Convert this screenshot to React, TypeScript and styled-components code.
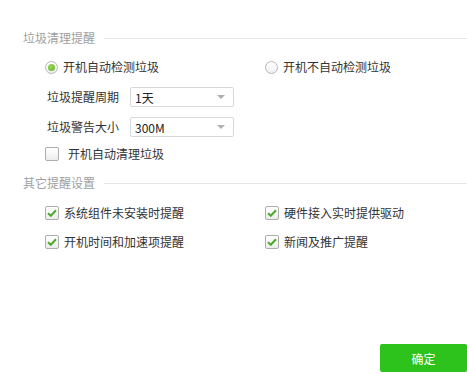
import React from 'react'
import styled, { createGlobalStyle } from 'styled-components'

const GlobalStyle = createGlobalStyle`
  html, body {
    margin: 0;
    padding: 0;
    background: #fff;
  }
  body {
    font-family: "Noto Sans CJK SC", "Liberation Sans", sans-serif;
    font-size: 12px;
    color: #333;
  }
`

const Page = styled.div`
  width: 467px;
  height: 374px;
  display: flex;
  flex-direction: column;
  box-sizing: border-box;
  padding-top: 28px;
  padding-bottom: 2px;
`

const SectionHeader = styled.div<{ $mt?: number }>`
  display: flex;
  align-items: center;
  height: 20px;
  padding-left: 23px;
  margin-top: ${(p) => p.$mt ?? 0}px;
  span {
    color: #a0a0a0;
    line-height: 20px;
    padding-right: 9px;
  }
  i {
    flex: 1;
    height: 1px;
    background: #e6e6e6;
  }
`

const Grid = styled.div<{ $mt: number; $gap: number }>`
  display: grid;
  grid-template-columns: 220px 1fr;
  row-gap: ${(p) => p.$gap}px;
  padding-left: 45px;
  margin-top: ${(p) => p.$mt}px;
`

const Option = styled.label<{ $gap?: number }>`
  display: flex;
  align-items: center;
  height: 20px;
  gap: ${(p) => p.$gap ?? 5}px;
  line-height: 20px;
  cursor: pointer;
`

const RadioMark = styled.span<{ $on?: boolean }>`
  width: 13px;
  height: 13px;
  box-sizing: border-box;
  border-radius: 50%;
  border: 1px solid #b8b8b8;
  background: linear-gradient(#ffffff, #f0f0f0);
  display: flex;
  align-items: center;
  justify-content: center;
  &::after {
    content: '';
    display: ${(p) => (p.$on ? 'block' : 'none')};
    width: 7px;
    height: 7px;
    border-radius: 50%;
    background: radial-gradient(circle at 40% 35%, #9ad85a, #5fb526);
  }
`

const CheckMark = styled.span<{ $on?: boolean }>`
  width: 14px;
  height: 14px;
  box-sizing: border-box;
  border-radius: 2px;
  border: 1px solid #adadad;
  background: linear-gradient(#ffffff, #ececec);
  display: flex;
  align-items: center;
  justify-content: center;
  svg {
    display: ${(p) => (p.$on ? 'block' : 'none')};
  }
`

const Field = styled.div<{ $mt: number }>`
  display: flex;
  align-items: center;
  height: 20px;
  margin-top: ${(p) => p.$mt}px;
  padding-left: 47px;
  gap: 10px;
  span {
    width: 73px;
    line-height: 20px;
  }
`

const Select = styled.div`
  width: 104px;
  height: 20px;
  box-sizing: border-box;
  border: 1px solid #d8d8d8;
  border-radius: 2px;
  display: flex;
  align-items: center;
  justify-content: space-between;
  padding: 0 8px 0 4px;
  font-size: 12px;
  color: #222;
  &::after {
    content: '';
    width: 0;
    height: 0;
    border-left: 4px solid transparent;
    border-right: 4px solid transparent;
    border-top: 4px solid #b0b0b0;
  }
`

const Row = styled.div<{ $mt: number }>`
  padding-left: 45px;
  margin-top: ${(p) => p.$mt}px;
`

const Footer = styled.div`
  margin-top: auto;
  display: flex;
  justify-content: flex-end;
`

const Button = styled.button`
  width: 87px;
  height: 28px;
  border: none;
  border-radius: 2px;
  background: #2ec21c;
  color: #fff;
  font-family: inherit;
  font-size: 12px;
  cursor: pointer;
`

const Tick = () => (
  <svg width="10" height="8" viewBox="0 0 10 8">
    <path d="M1 4.2 L3.8 6.8 L9 1.2" fill="none" stroke="#4ea82a" strokeWidth="2" />
  </svg>
)

const Check = ({ on, label, gap }: { on: boolean; label: string; gap?: number }) => (
  <Option $gap={gap}>
    <CheckMark $on={on}>
      <Tick />
    </CheckMark>
    {label}
  </Option>
)

const App = () => {
  return (
    <Page>
      <GlobalStyle />
      <SectionHeader>
        <span>垃圾清理提醒</span>
        <i />
      </SectionHeader>
      <Grid $mt={9} $gap={0}>
        <Option>
          <RadioMark $on />
          开机自动检测垃圾
        </Option>
        <Option>
          <RadioMark />
          开机不自动检测垃圾
        </Option>
      </Grid>
      <Field $mt={10}>
        <span>垃圾提醒周期</span>
        <Select>1天</Select>
      </Field>
      <Field $mt={10}>
        <span>垃圾警告大小</span>
        <Select>300M</Select>
      </Field>
      <Row $mt={7}>
        <Check on={false} label="开机自动清理垃圾" gap={9} />
      </Row>
      <SectionHeader $mt={9}>
        <span>其它提醒设置</span>
        <i />
      </SectionHeader>
      <Grid $mt={10} $gap={9}>
        <Check on label="系统组件未安装时提醒" />
        <Check on label="硬件接入实时提供驱动" />
        <Check on label="开机时间和加速项提醒" />
        <Check on label="新闻及推广提醒" />
      </Grid>
      <Footer>
        <Button>确定</Button>
      </Footer>
    </Page>
  )
}

export default App
